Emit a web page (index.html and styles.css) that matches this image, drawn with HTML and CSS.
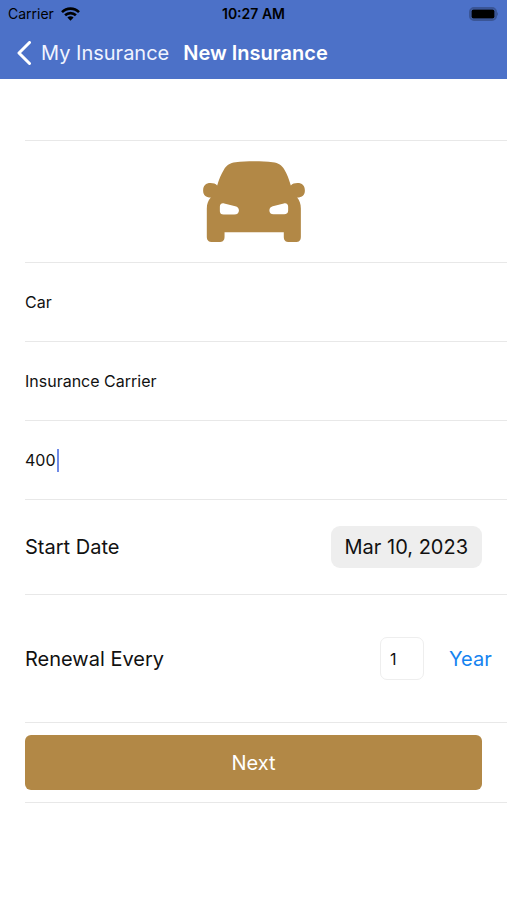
FILE: index.html
```html
<!DOCTYPE html>
<html lang="en">
<head>
	<meta charset="utf-8">
	<meta name="viewport" content="width=device-width, initial-scale=1">
	<title>New Insurance</title>
	<link rel="stylesheet" href="styles.css">
</head>
<body>
<header class="header">
	<div class="status">
		<div class="carrier">
			<span>Carrier</span>
			<svg class="wifi" viewBox="0 0 19 14" aria-hidden="true">
				<path d="M1 5.2A12 12 0 0 1 18 5.2M4.1 8.3A7.7 7.7 0 0 1 14.9 8.3" fill="none" stroke="#000" stroke-width="2.6"/>
				<path d="M9.5 13.8L6.4 10.6A4.4 4.4 0 0 1 12.6 10.6Z"/>
			</svg>
		</div>
		<span class="time">10:27 AM</span>
		<svg class="battery" viewBox="0 0 30 14" aria-hidden="true">
			<rect x="1" y="1" width="26" height="12" rx="4" fill="none" stroke="#3a5596" stroke-width="2"/>
			<rect x="2.5" y="2.5" width="23" height="9" rx="2"/>
			<path d="M28 5Q30 7 28 9Z" fill="#3a5596"/>
		</svg>
	</div>
	<nav class="nav">
		<a class="back" href="#">
			<svg class="chevron" viewBox="0 0 14 24" aria-hidden="true">
				<path d="M12.5 1.5L2 12L12.5 22.5" fill="none" stroke="#fff" stroke-width="3" stroke-linecap="round" stroke-linejoin="round"/>
			</svg>
			<span>My Insurance</span>
		</a>
		<h1>New Insurance</h1>
	</nav>
</header>

<form class="form">
	<div class="row picture">
		<svg class="car" viewBox="40 92 304 242" role="img" aria-label="Car">
			<path fill="#b28846" fill-rule="evenodd" d="M82 165C87 148 94 131 102 118C110 105 120 98 137 96C170 92 216 92 248 96C265 98 275 105 283 118C291 131 297 148 302 165C307 160 313 158 322 158C336 158 344 166 344 180C344 194 336 201 321 201C328 210 332 220 332 234V318C332 329 327 334 316 334H298C286 334 281 329 281 318V305H104V318C104 329 99 334 87 334H68C57 334 51 329 51 318V234C51 220 55 210 63 201C48 201 40 194 40 180C40 166 48 158 62 158C71 158 77 160 82 165ZM103 219C95 217 90 221 90 229V242C90 248 94 252 101 252H133C142 252 147 247 147 240C147 232 143 229 136 227ZM281 219L248 227C241 229 238 233 238 240C238 247 242 251 250 251H282C290 251 294 248 294 241V229C294 221 289 217 281 219Z"/>
		</svg>
	</div>
	<div class="row field">
		<input type="text" value="Car" aria-label="Insurance type">
	</div>
	<div class="row field">
		<input type="text" value="Insurance Carrier" aria-label="Carrier">
	</div>
	<div class="row field">
		<input class="amount" type="text" inputmode="numeric" value="400" aria-label="Amount">
		<span class="caret"></span>
	</div>
	<div class="row start">
		<label for="start-date">Start Date</label>
		<button class="date" id="start-date" type="button">Mar 10, 2023</button>
	</div>
	<div class="row renewal">
		<label for="renewal-count">Renewal Every</label>
		<input class="count" id="renewal-count" type="text" inputmode="numeric" value="1">
		<select class="period" aria-label="Renewal period">
			<option>Year</option>
		</select>
	</div>
	<div class="row submit">
		<button class="next" type="submit">Next</button>
	</div>
</form>
</body>
</html>
```

FILE: styles.css
```css
*{
	box-sizing: border-box;
}
body{
	margin: 0;
	background: #fff;
	color: #111;
	font-family: Inter, "Liberation Sans", sans-serif;
	font-size: 20px;
}
input,
select,
button{
	font-family: inherit;
	color: inherit;
	margin: 0;
	padding: 0;
	border: 0;
	outline: none;
	background: transparent;
}

/* header */
.header{
	background: #4c71c8;
}
.status{
	display: grid;
	grid-template-columns: 1fr auto 1fr;
	align-items: center;
	height: 27px;
	padding: 0 8px;
	color: #000;
	font-size: 14px;
}
.carrier{
	display: flex;
	align-items: center;
	gap: 7px;
}
.wifi{
	width: 19px;
	height: 14px;
}
.time{
	font-weight: 600;
}
.battery{
	width: 30px;
	height: 14px;
	justify-self: end;
}
.nav{
	display: flex;
	align-items: center;
	gap: 14px;
	height: 52px;
	padding: 0 17px;
	color: #fff;
}
.back{
	display: flex;
	align-items: center;
	gap: 10px;
	color: #f0f4ff;
	text-decoration: none;
}
.chevron{
	width: 14px;
	height: 24px;
}
.nav h1{
	margin: 0;
	font-size: 20px;
	font-weight: 600;
}

/* form rows */
.form{
	margin: 61px 0 0 25px;
	border-top: 1px solid #e8e8e8;
}
.row{
	display: flex;
	align-items: center;
	padding-right: 25px;
	border-bottom: 1px solid #e8e8e8;
}
.picture{
	justify-content: center;
	height: 122px;
}
.car{
	width: 102px;
	height: 81px;
}
.field{
	height: 79px;
}
.field input{
	width: 100%;
	font-size: 16px;
}
.field .amount{
	width: 32px;
}
.caret{
	width: 2px;
	height: 23px;
	background: #6f8ae6;
}
.start{
	justify-content: space-between;
	height: 95px;
}
.date{
	height: 42px;
	padding: 0 14px;
	border-radius: 9px;
	background: #eee;
	font-size: 20px;
}
.renewal{
	height: 128px;
	padding-right: 15px;
}
.count{
	width: 44px;
	height: 43px;
	margin-left: auto;
	padding: 0 9px;
	border: 1px solid #eee;
	border-radius: 7px;
	font-size: 16px;
}
.period{
	margin-left: 25px;
	appearance: none;
	color: #1583f0;
	font-size: 20px;
}
.submit{
	height: 80px;
}
.next{
	width: 100%;
	height: 55px;
	border-radius: 6px;
	background: #b28846;
	color: #fff;
	font-size: 20px;
}
```
